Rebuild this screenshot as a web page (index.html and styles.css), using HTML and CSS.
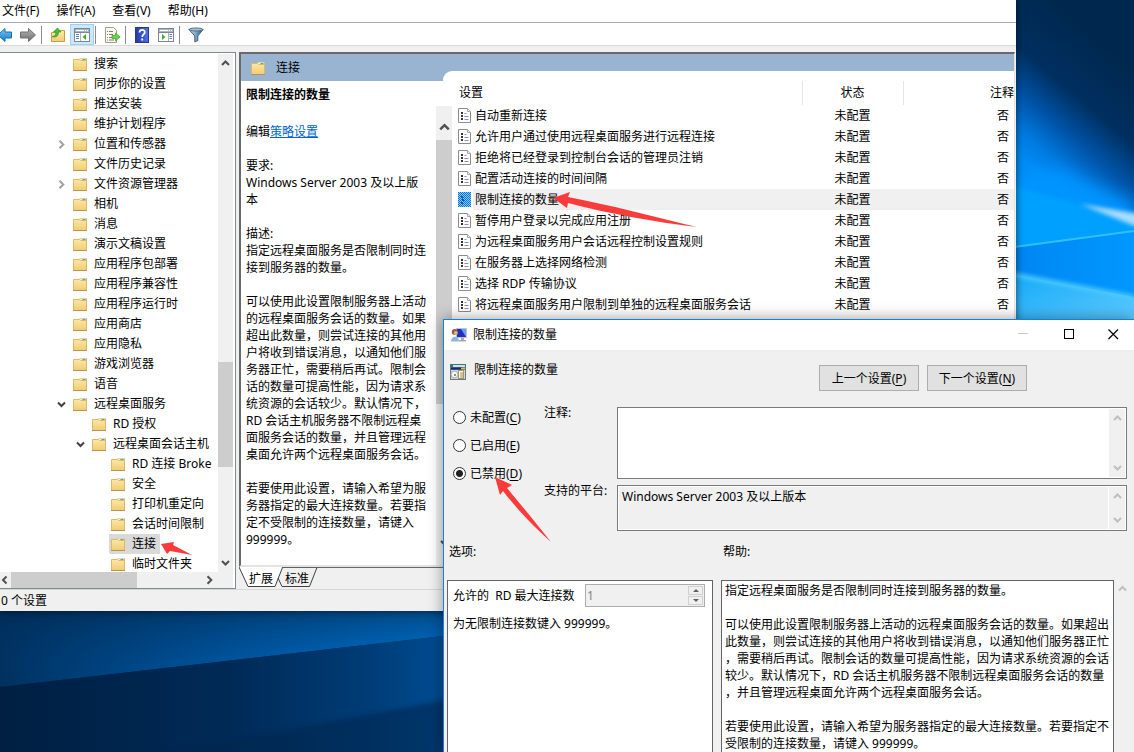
FILE: index.html
```html
<!DOCTYPE html>
<html lang="zh-CN">
<head>
<meta charset="utf-8">
<title>限制连接的数量</title>
<link rel="stylesheet" href="styles.css">
</head>
<body>
<svg class="defs" aria-hidden="true">
  <defs>
    <linearGradient id="gFolder" x1="0" y1="0" x2="0" y2="1"><stop offset="0" stop-color="#fdeaa8"/><stop offset="1" stop-color="#f0cc74"/></linearGradient>
    <linearGradient id="gBack" x1="0" y1="0" x2="0" y2="1"><stop offset="0" stop-color="#6cc8f8"/><stop offset="1" stop-color="#1c7cc8"/></linearGradient>
    <linearGradient id="gGrey" x1="0" y1="0" x2="0" y2="1"><stop offset="0" stop-color="#b4b4b4"/><stop offset="1" stop-color="#6e6e6e"/></linearGradient>
    <linearGradient id="gHelp" x1="0" y1="0" x2="1" y2="0"><stop offset="0" stop-color="#2838a0"/><stop offset="1" stop-color="#4c74e8"/></linearGradient>
    <linearGradient id="gFunnel" x1="0" y1="0" x2="1" y2="0"><stop offset="0" stop-color="#d6e6f0"/><stop offset=".5" stop-color="#7aa6c4"/><stop offset="1" stop-color="#34566e"/></linearGradient>
    <pattern id="pDither" width="2" height="2" patternUnits="userSpaceOnUse"><rect width="2" height="2" fill="#8cc4f0"/><rect width="1" height="1" fill="#0078d7"/><rect x="1" y="1" width="1" height="1" fill="#0078d7"/></pattern>
    <symbol id="folder" viewBox="0 0 14 14"><path d="M.5 2.500H6L7.500 1.500H13.500V13.500H.5Z" fill="url(#gFolder)" stroke="#dcb868"/><path d="M7.500 1.500H13V3.500H7.500Z" fill="#fbf0c8"/><path d="M7.500 3.500H13" stroke="#dcb868"/><path d="M9.500 2.500H12.500" stroke="#4a9ce0"/><path d="M0 13.500H14" stroke="#b89450"/></symbol>
    <symbol id="up" viewBox="0 0 9 9"><path d="M1 6.500 4.500 3 8 6.500" fill="none" stroke="currentColor" stroke-width="2"/></symbol>
    <symbol id="down" viewBox="0 0 9 9"><path d="M1 2.500 4.500 6 8 2.500" fill="none" stroke="currentColor" stroke-width="2"/></symbol>
    <symbol id="right" viewBox="0 0 9 9"><path d="M2.500 .8 6.300 4.500 2.500 8.200" fill="none" stroke="currentColor" stroke-width="2"/></symbol>
    <symbol id="left" viewBox="0 0 9 9"><path d="M6.500 1 3 4.500 6.500 8" fill="none" stroke="currentColor" stroke-width="2"/></symbol>
    <symbol id="doc" viewBox="0 0 13 15"><path d="M.5.5H9.500L12.500 3.500V14.500H.5Z" fill="#fff" stroke="#8c8c8c"/><path d="M9.500.5V3.500H12.500" fill="#eee" stroke="#a8a8a8"/><path d="M3 4H5V6H3ZM3 7H5V9H3ZM3 10H5V12H3Z" fill="#333"/><path d="M6.500 5.500H8.500M6.500 8.500H10.500M6.500 11.500H10.500" stroke="#8c8cb4"/></symbol>
    <symbol id="docsel" viewBox="0 0 13 15"><rect width="13" height="15" fill="url(#pDither)"/><path d="M3 4H5V6H3ZM4 7H6V9H4ZM3 10H5V12H3Z" fill="#0a5ca8"/></symbol>
    <symbol id="console" viewBox="0 0 16 14"><rect x=".5" y=".5" width="15" height="13" fill="#fff" stroke="#7d8794"/><rect x="1" y="1" width="14" height="3" fill="#a9b6c4"/><path d="M2 2.500H10M11 2.500H12M13 2.500H14" stroke="#fff"/><path d="M1 4.500H15" stroke="#7d8794"/><path d="M6.500 5V13" stroke="#aab4c0"/><path d="M2 6.500H5M2 8.500H5M2 10.500H5" stroke="#5c84c0"/><path d="M12 6V12L8.500 9Z" fill="#3cae2c"/></symbol>
    <symbol id="console2" viewBox="0 0 16 14"><rect x=".5" y=".5" width="15" height="13" fill="#fff" stroke="#7d8794"/><rect x="1" y="1" width="14" height="3" fill="#a9b6c4"/><path d="M2 2.500H10M11 2.500H12M13 2.500H14" stroke="#fff"/><path d="M1 4.500H15" stroke="#7d8794"/><path d="M10.500 5V13" stroke="#aab4c0"/><path d="M11.500 6.500H14M11.500 8.500H14M11.500 10.500H14" stroke="#5c84c0"/><path d="M4 6V12L7.500 9Z" fill="#3cae2c"/></symbol>
  </defs>
</svg>

<svg class="wallpaper" viewBox="0 0 1134 752" preserveAspectRatio="none" aria-hidden="true">
  <defs>
    <linearGradient id="wTop" gradientUnits="userSpaceOnUse" x1="1120" y1="60" x2="1030" y2="166"><stop offset="0" stop-color="#00284f"/><stop offset=".4" stop-color="#002f60"/><stop offset=".65" stop-color="#0054a8"/><stop offset=".85" stop-color="#007ae0"/><stop offset="1" stop-color="#008cf5"/></linearGradient>
    <linearGradient id="wMid" x1="0" y1="0" x2="1" y2="0"><stop offset="0" stop-color="#0084f0"/><stop offset="1" stop-color="#0098ff"/></linearGradient>
    <linearGradient id="wLow" x1="0" y1="0" x2="1" y2="1"><stop offset="0" stop-color="#10a8f8"/><stop offset="1" stop-color="#62ccff"/></linearGradient>
    <linearGradient id="wWedge" x1="0" y1="0" x2="1" y2="0"><stop offset="0" stop-color="#00305e"/><stop offset=".5" stop-color="#005aa8"/><stop offset="1" stop-color="#0084ec"/></linearGradient>
    <linearGradient id="wShade" x1="0" y1="0" x2="0" y2="1"><stop offset="0" stop-color="#00284e" stop-opacity=".7"/><stop offset="1" stop-color="#00407c" stop-opacity="0"/></linearGradient>
    <linearGradient id="wFloor" x1="0" y1="0" x2="1" y2="0"><stop offset="0" stop-color="#001f42"/><stop offset=".5" stop-color="#002a56"/><stop offset=".8" stop-color="#003c76"/><stop offset="1" stop-color="#005098"/></linearGradient>
    <filter id="soft"><feGaussianBlur stdDeviation="2"/></filter>
    <filter id="glow" x="-50%" y="-50%" width="200%" height="200%"><feGaussianBlur stdDeviation="8"/></filter>
  </defs>
  <rect width="1134" height="752" fill="#00264c"/>
  <rect x="1000" width="134" height="330" fill="url(#wTop)"/>
  <path d="M1000 175 1060 170 1134 205V232L1000 250Z" fill="#0094ff" filter="url(#glow)"/>
  <path d="M1000 182 1134 220V234L1000 252Z" fill="#00a0ff" filter="url(#soft)"/>
  <path d="M1080 204 1140 214V228Z" fill="#a8dcff" filter="url(#soft)"/>
  <path d="M1000 249 1134 231V330H1000Z" fill="url(#wMid)"/>
  <path d="M1000 249 1134 231" stroke="#30c0ff" stroke-width="2"/>
  <path d="M1000 272 1134 297V330H1000Z" fill="url(#wLow)"/>
  <path d="M1000 272 1134 297" stroke="#50ccff" stroke-width="4" filter="url(#soft)"/>
  <path d="M0 600H460V634L0 687Z" fill="url(#wWedge)"/>
  <path d="M0 600H460V634L0 687Z" fill="url(#wShade)"/>
  <path d="M0 687 460 634V752H0Z" fill="url(#wFloor)"/>
  <path d="M120 762 460 697V762Z" fill="#00264e" opacity=".55" filter="url(#soft)"/>
</svg>

<main class="window main-window">
  <nav class="menubar">
    <button>文件(F)</button><button>操作(A)</button><button>查看(V)</button><button>帮助(H)</button>
  </nav>
  <div class="toolbar">
    <button class="back" aria-label="后退"><svg width="14" height="16" viewBox="2 0 14 16"><path d="M0 8 7 1.500V5H13.500V11H7V14.500Z" fill="url(#gBack)" stroke="#1c6cb0"/></svg></button>
    <button aria-label="前进"><svg width="16" height="16"><path d="M15.500 8 8.500 1.500V5H.5V11H8.500V14.500Z" fill="url(#gGrey)" stroke="#707070"/></svg></button>
    <span class="sep"></span>
    <button aria-label="上移"><svg width="16" height="16"><path d="M1.500 5.500H8L9.500 3.500H14.500V14.500H1.500Z" fill="url(#gFolder)" stroke="#c8a04c"/><path d="M2 9.500C5 9.500 6 8 6 5H3.500L7.500 1 11 5H8.500C8.500 9 6 11 2 9.500Z" fill="#48c030" stroke="#2c9420" stroke-width=".7"/></svg></button>
    <button class="pressed" aria-label="显示控制台树"><svg width="16" height="14"><use href="#console"/></svg></button>
    <span class="sep"></span>
    <button aria-label="导出列表"><svg width="16" height="16"><path d="M1.500.5H9.500L12.500 3.500V15.500H1.500Z" fill="#fdfaee" stroke="#a49c88"/><path d="M3 4.500H4M5 4.500H9M3 7.500H4M5 7.500H9M3 10.500H4M5 10.500H8M3 13H4M5 13H10" stroke="#7c7c7c"/><path d="M8 8.500H11.500V6L16 10 11.500 14V11.500H8Z" fill="#64d44c" stroke="#38a028" stroke-width=".7"/></svg></button>
    <span class="sep"></span>
    <button aria-label="帮助"><svg width="14" height="16"><rect x=".5" y=".5" width="13" height="15" fill="url(#gHelp)" stroke="#283890"/><path d="M4.500 5.500C4.500 2 9.800 2 9.800 5.200 9.800 7.500 7.200 7.300 7.200 10M7.200 11.500V13.500" fill="none" stroke="#fff" stroke-width="1.800"/></svg></button>
    <button aria-label="显示操作窗格"><svg width="16" height="14"><use href="#console2"/></svg></button>
    <span class="sep"></span>
    <button aria-label="筛选器"><svg width="16" height="16"><path d="M1 2.500H15L9.800 9V13.500L6.800 15V9Z" fill="url(#gFunnel)" stroke="#406078"/><ellipse cx="8" cy="2.500" rx="7" ry="1.500" fill="#a8c4d8" stroke="#4c6c84"/></svg></button>
  </div>

  <div class="workspace">
    <section class="tree-pane">
      <div class="tree-body">
        <ul class="tree">
          <li><svg class="exp"></svg><span class="node"><svg class="fold"><use href="#folder"/></svg>搜索</span></li>
          <li><svg class="exp"></svg><span class="node"><svg class="fold"><use href="#folder"/></svg>同步你的设置</span></li>
          <li><svg class="exp"></svg><span class="node"><svg class="fold"><use href="#folder"/></svg>推送安装</span></li>
          <li><svg class="exp"></svg><span class="node"><svg class="fold"><use href="#folder"/></svg>维护计划程序</span></li>
          <li><svg class="exp closed"><use href="#right"/></svg><span class="node"><svg class="fold"><use href="#folder"/></svg>位置和传感器</span></li>
          <li><svg class="exp"></svg><span class="node"><svg class="fold"><use href="#folder"/></svg>文件历史记录</span></li>
          <li><svg class="exp closed"><use href="#right"/></svg><span class="node"><svg class="fold"><use href="#folder"/></svg>文件资源管理器</span></li>
          <li><svg class="exp"></svg><span class="node"><svg class="fold"><use href="#folder"/></svg>相机</span></li>
          <li><svg class="exp"></svg><span class="node"><svg class="fold"><use href="#folder"/></svg>消息</span></li>
          <li><svg class="exp"></svg><span class="node"><svg class="fold"><use href="#folder"/></svg>演示文稿设置</span></li>
          <li><svg class="exp"></svg><span class="node"><svg class="fold"><use href="#folder"/></svg>应用程序包部署</span></li>
          <li><svg class="exp"></svg><span class="node"><svg class="fold"><use href="#folder"/></svg>应用程序兼容性</span></li>
          <li><svg class="exp"></svg><span class="node"><svg class="fold"><use href="#folder"/></svg>应用程序运行时</span></li>
          <li><svg class="exp"></svg><span class="node"><svg class="fold"><use href="#folder"/></svg>应用商店</span></li>
          <li><svg class="exp"></svg><span class="node"><svg class="fold"><use href="#folder"/></svg>应用隐私</span></li>
          <li><svg class="exp"></svg><span class="node"><svg class="fold"><use href="#folder"/></svg>游戏浏览器</span></li>
          <li><svg class="exp"></svg><span class="node"><svg class="fold"><use href="#folder"/></svg>语音</span></li>
          <li><svg class="exp"><use href="#down"/></svg><span class="node"><svg class="fold"><use href="#folder"/></svg>远程桌面服务</span></li>
          <li class="l2"><svg class="exp"></svg><span class="node"><svg class="fold"><use href="#folder"/></svg>RD 授权</span></li>
          <li class="l2"><svg class="exp"><use href="#down"/></svg><span class="node"><svg class="fold"><use href="#folder"/></svg>远程桌面会话主机</span></li>
          <li class="l3"><svg class="exp"></svg><span class="node"><svg class="fold"><use href="#folder"/></svg>RD 连接 Broke</span></li>
          <li class="l3"><svg class="exp"></svg><span class="node"><svg class="fold"><use href="#folder"/></svg>安全</span></li>
          <li class="l3"><svg class="exp"></svg><span class="node"><svg class="fold"><use href="#folder"/></svg>打印机重定向</span></li>
          <li class="l3"><svg class="exp"></svg><span class="node"><svg class="fold"><use href="#folder"/></svg>会话时间限制</span></li>
          <li class="l3"><svg class="exp"></svg><span class="node selected"><svg class="fold"><use href="#folder"/></svg>连接</span></li>
          <li class="l3"><svg class="exp"></svg><span class="node"><svg class="fold"><use href="#folder"/></svg>临时文件夹</span></li>
        </ul>
        <div class="vscroll tree-vscroll"><svg class="arrow"><use href="#up"/></svg><i class="gap-a"></i><i class="thumb"></i><i class="gap-b"></i><svg class="arrow"><use href="#down"/></svg></div>
      </div>
      <div class="hscroll"><svg class="arrow"><use href="#left"/></svg><i class="thumb"></i><i class="rest"></i><svg class="arrow"><use href="#right"/></svg></div>
    </section>

    <section class="result-pane">
      <div class="result-frame">
        <div class="extended">
          <header class="ext-head"><h1><svg class="fold"><use href="#folder"/></svg>连接</h1><span class="corner"></span></header>
          <h2>限制连接的数量</h2>
          <div class="ext-body">
            <div class="ext-text">
              <p>编辑<a href="#">策略设置</a></p>
              <p>要求:<br>Windows Server 2003 及以上版本</p>
              <p>描述:<br>指定远程桌面服务是否限制同时连接到服务器的数量。</p>
              <p>可以使用此设置限制服务器上活动的远程桌面服务会话的数量。如果超出此数量，则尝试连接的其他用户将收到错误消息，以通知他们服务器正忙，需要稍后再试。限制会话的数量可提高性能，因为请求系统资源的会话较少。默认情况下，RD 会话主机服务器不限制远程桌面服务会话的数量，并且管理远程桌面允许两个远程桌面服务会话。</p>
              <p>若要使用此设置，请输入希望为服务器指定的最大连接数量。若要指定不受限制的连接数量，请键入 999999。</p>
            </div>
            <div class="vscroll ext-scroll"><svg class="arrow big"><use href="#up"/></svg><i class="thumb"></i><i class="rest"></i><svg class="arrow"><use href="#down"/></svg></div>
          </div>
        </div>
        <div class="list">
          <table>
            <colgroup><col class="c-icon"><col><col class="c-state"><col class="c-note"></colgroup>
            <thead><tr><th colspan="2">设置</th><th class="state">状态</th><th class="note">注释</th></tr></thead>
            <tbody>
              <tr><td><svg class="doc"><use href="#doc"/></svg></td><td>自动重新连接</td><td class="state">未配置</td><td class="note">否</td></tr>
              <tr><td><svg class="doc"><use href="#doc"/></svg></td><td>允许用户通过使用远程桌面服务进行远程连接</td><td class="state">未配置</td><td class="note">否</td></tr>
              <tr><td><svg class="doc"><use href="#doc"/></svg></td><td>拒绝将已经登录到控制台会话的管理员注销</td><td class="state">未配置</td><td class="note">否</td></tr>
              <tr><td><svg class="doc"><use href="#doc"/></svg></td><td>配置活动连接的时间间隔</td><td class="state">未配置</td><td class="note">否</td></tr>
              <tr class="current"><td><svg class="doc"><use href="#docsel"/></svg></td><td>限制连接的数量</td><td class="state">未配置</td><td class="note">否</td></tr>
              <tr><td><svg class="doc"><use href="#doc"/></svg></td><td>暂停用户登录以完成应用注册</td><td class="state">未配置</td><td class="note">否</td></tr>
              <tr><td><svg class="doc"><use href="#doc"/></svg></td><td>为远程桌面服务用户会话远程控制设置规则</td><td class="state">未配置</td><td class="note">否</td></tr>
              <tr><td><svg class="doc"><use href="#doc"/></svg></td><td>在服务器上选择网络检测</td><td class="state">未配置</td><td class="note">否</td></tr>
              <tr><td><svg class="doc"><use href="#doc"/></svg></td><td>选择 RDP 传输协议</td><td class="state">未配置</td><td class="note">否</td></tr>
              <tr><td><svg class="doc"><use href="#doc"/></svg></td><td>将远程桌面服务用户限制到单独的远程桌面服务会话</td><td class="state">未配置</td><td class="note">否</td></tr>
            </tbody>
          </table>
        </div>
      </div>
      <div class="tabs">
        <svg class="tab-shape" width="80" height="21" aria-hidden="true"><path d="M0 0 9 19.500H36L43 0Z" fill="#fff"/><path d="M0 0 9 19.500H36L43.500.5H78L70.500 19.500H43L39 11" fill="none" stroke="#404040"/><path d="M43.500.5H80" stroke="#606060"/></svg>
        <button>扩展</button><button>标准</button>
      </div>
    </section>
  </div>
  <footer class="status">0 个设置</footer>
</main>

<section class="window dialog" role="dialog" aria-labelledby="dlg-title">
  <header class="titlebar">
    <svg width="17" height="16" aria-hidden="true"><path d="M5.500 1.500H15.500V10.500H5.500Z" fill="#1c30c4" stroke="#c0c4cc"/><path d="M10 2H15V10Z" fill="#6c9cf0"/><path d="M10 11H13V13H15V14.500H8V13H10Z" fill="#a4a8b0"/><circle cx="3.800" cy="5" r="3" fill="#8c6038"/><circle cx="4.800" cy="6" r="2" fill="#e0b088"/><path d="M0 14.500C0 8 8 8 8 14.500Z" fill="#88b8e0"/></svg>
    <h1 id="dlg-title">限制连接的数量</h1>
    <button class="min" aria-label="最小化"><svg width="11" height="11"><path d="M0 4.500H10" stroke="#ccc"/></svg></button>
    <button aria-label="最大化"><svg width="11" height="11"><rect x=".5" y=".5" width="9" height="9" fill="none" stroke="#000"/></svg></button>
    <button aria-label="关闭"><svg width="11" height="11"><path d="M.5.5 10 10M10 .5.5 10" stroke="#000" stroke-width="1.200"/></svg></button>
  </header>
  <div class="policy">
    <svg width="16" height="16" aria-hidden="true"><rect width="16" height="16" fill="#68787c"/><rect width="16" height="3" fill="#2c7c80"/><rect x="3" y="1" width="12" height="2" fill="#dcdce4"/><path d="M1 4.500H12" stroke="#0c2c84" stroke-width="2"/><path d="M11 4.500H15" stroke="#e8c020" stroke-width="1.500"/><rect x="1" y="6" width="14" height="9" fill="#dcd8cc"/><circle cx="4.500" cy="10.500" r="3.500" fill="#f4f4f8" stroke="#a8a8b4"/><circle cx="5" cy="11" r="1" fill="#2c9440"/><rect x="8.500" y="6.500" width="5" height="8" fill="#fffbe4" stroke="#a09474"/><path d="M10 9H13M10 11H13M10 13H13" stroke="#a48848"/></svg>
    <span class="policy-name">限制连接的数量</span>
    <div class="policy-nav"><button>上一个设置(<u>P</u>)</button><button>下一个设置(<u>N</u>)</button></div>
  </div>
  <form class="settings">
    <div class="radios">
      <label><input type="radio" name="state"><span>未配置(<u>C</u>)</span></label>
      <label><input type="radio" name="state"><span>已启用(<u>E</u>)</span></label>
      <label><input type="radio" name="state" checked><span>已禁用(<u>D</u>)</span></label>
    </div>
    <label class="field-label" for="note">注释:</label>
    <div class="field field-note"><textarea id="note"></textarea><div class="vscroll muted"><svg class="arrow"><use href="#up"/></svg><i class="rest"></i><svg class="arrow"><use href="#down"/></svg></div></div>
    <label class="field-label" for="platform">支持的平台:</label>
    <div class="field field-platform"><textarea id="platform" readonly>Windows Server 2003 及以上版本</textarea><div class="vscroll muted"><svg class="arrow"><use href="#up"/></svg><i class="rest"></i><svg class="arrow"><use href="#down"/></svg></div></div>
  </form>
  <div class="details">
    <section class="options">
      <h2>选项:</h2>
      <div class="box">
        <div class="opt-row"><label for="max">允许的&nbsp; RD 最大连接数</label>
          <span class="spin"><input id="max" type="text" value="1" disabled><span class="spin-btns"><button disabled aria-label="增加"><svg width="6" height="3"><path d="M0 3 3 0 6 3Z"/></svg></button><button disabled aria-label="减少"><svg width="6" height="3"><path d="M0 0 3 3 6 0Z"/></svg></button></span></span></div>
        <p>为无限制连接数键入 999999。</p>
      </div>
    </section>
    <section class="help">
      <h2>帮助:</h2>
      <div class="box">
        <p>指定远程桌面服务是否限制同时连接到服务器的数量。</p>
        <p>可以使用此设置限制服务器上活动的远程桌面服务会话的数量。如果超出此数量，则尝试连接的其他用户将收到错误消息，以通知他们服务器正忙，需要稍后再试。限制会话的数量可提高性能，因为请求系统资源的会话较少。默认情况下，RD 会话主机服务器不限制远程桌面服务会话的数量，并且管理远程桌面允许两个远程桌面服务会话。</p>
        <p>若要使用此设置，请输入希望为服务器指定的最大连接数量。若要指定不受限制的连接数量，请键入 999999。</p>
      </div>
    </section>
    <div class="vscroll muted help-scroll"><svg class="arrow"><use href="#up"/></svg></div>
  </div>
</section>

<svg class="marks" aria-hidden="true">
  <path d="M553 198 570 192 568 197 C610 205 655 217 697 227 C655 222 610 214 568 203L567 208Z"/>
  <path d="M161 544 174 542 173 545 192 555 170 551 167 554Z"/>
  <path d="M495 477 512 485 507 488 C522 506 536 523 551 542 C532 525 516 508 503 491L500 495Z"/>
</svg>
</body>
</html>
```
FILE: styles.css
```css
* { box-sizing: border-box; }

html, body { height: 100%; }

body {
  margin: 0;
  position: relative;
  overflow: hidden;
  background: #00264c;
  color: #000;
  font: 12px/17px "Noto Sans", "Noto Sans CJK SC", sans-serif;
  text-spacing-trim: space-all;
}

h1, h2, p, ul { margin: 0; padding: 0; font-size: 12px; font-weight: 400; }
ul { list-style: none; }
button, input, textarea { font: inherit; color: inherit; margin: 0; padding: 0; border: 0; background: none; }
u { text-underline-offset: 2px; }

.defs { position: absolute; width: 0; height: 0; }
.wallpaper { position: absolute; inset: 0; width: 100%; height: 100%; }
.marks { position: absolute; inset: 0; width: 100%; height: 100%; pointer-events: none; fill: #fb3b3a; }

/* Windows on the desktop */
.window { position: absolute; display: flex; flex-direction: column; }
.main-window { inset: 0 118px 141px 0; background: #f0f0f0; box-shadow: 0 0 8px rgba(0, 0, 0, .6); }
.dialog { inset: 319px 0 0 443px; background: #f0f0f0; border: solid #1a80d2; border-width: 1px 0 0 1px; box-shadow: 0 0 14px rgba(0, 0, 0, .4); }

.menubar { display: flex; gap: 17px; height: 23px; padding: 0 0 1px 2px; background: #fff; border-bottom: 1px solid #a8a8a8; }
.toolbar { display: flex; align-items: center; height: 23px; padding: 1px 0 0 1px; background: #fff; border-bottom: 1px solid #dadada; }
.toolbar button { display: flex; align-items: center; justify-content: center; width: 24px; height: 21px; }
.toolbar .back { width: 15px; justify-content: flex-start; margin-left: -1px; }
.toolbar .pressed { background: #cce8ff; border: 1px solid #99d1ff; }
.toolbar .sep { width: 1px; height: 18px; margin: 0 4px 0 1px; background: #8c8c8c; }
.toolbar .back + button { margin-left: 1px; }

.workspace { flex: 1; min-height: 0; display: flex; gap: 3px; padding-top: 6px; }

/* Scrollbars */
.vscroll { display: flex; flex-direction: column; align-items: center; width: 16px; background: #f0f0f0; color: #505050; }
.arrow { flex: none; width: 9px; height: 18px; }
.thumb { background: #cdcdcd; }
.vscroll .thumb { width: 100%; }
.vscroll .rest { flex: 1; }
.muted { color: #bfbfbf; }

/* Console tree */
.tree-pane { flex: none; width: 236px; display: flex; flex-direction: column; background: #fff; border: solid #828790; border-width: 1px 1px 1px 0; }
.tree-body { flex: 1; min-height: 0; display: flex; padding: 1px 2px 0 0; }
.tree { flex: 1; min-width: 0; overflow: hidden; }
.tree li { display: flex; align-items: center; height: 20px; padding-left: 57px; white-space: nowrap; }
.tree .l2 { padding-left: 76px; }
.tree .l3 { padding-left: 95px; }
.exp { flex: none; width: 9px; height: 9px; margin-right: 5px; color: #404040; }
.exp.closed { color: #a0a0a0; }
.fold { flex: none; width: 14px; height: 14px; }
.node { display: flex; align-items: center; gap: 7px; height: 20px; padding: 0 4px 1px 2px; }
.node.selected { background: #d9d9d9; }
.tree-vscroll { width: 15px; }
.tree-vscroll .gap-a { flex: 289; }
.tree-vscroll .thumb { flex: 105; }
.tree-vscroll .gap-b { flex: 87; }
.hscroll { display: flex; align-items: center; height: 16px; margin-right: 2px; padding-right: 19px; background: #f0f0f0; color: #505050; }
.hscroll .thumb { flex: 126; height: 16px; margin-left: 2px; }
.hscroll .rest { flex: 68; }

/* Result pane */
.result-pane { flex: 1; min-width: 0; display: flex; flex-direction: column; margin-right: 1px; }
.result-frame { flex: 1; min-height: 0; display: flex; background: #fff; border: 2px solid #696969; border-color: #696969 #e3e3e3 #e3e3e3 #696969; border-right-width: 1px; }
.extended { flex: none; width: 212px; display: flex; flex-direction: column; }
.ext-head { display: flex; align-items: flex-end; justify-content: space-between; height: 27px; background: #99b4d1; }
.ext-head h1 { display: flex; align-items: center; gap: 11px; height: 27px; padding-left: 10px; }
.corner { width: 10px; height: 10px; background: #fff; border-radius: 9px 0 0 0; }
.extended h2 { height: 25px; padding: 5px 5px 0; font-weight: 700; }
.ext-body { flex: 1; min-height: 0; display: flex; justify-content: space-between; padding-right: 1px; overflow: hidden; }
.ext-text { width: 190px; padding: 17px 4px 0 5px; }
.ext-text p { margin-bottom: 17px; }
.ext-text a { color: #0066cc; }
.ext-scroll { padding-bottom: 13px; }
.ext-scroll .big { width: 11px; height: 34px; padding-top: 8px; }
.ext-scroll .thumb { flex: 265; }
.ext-scroll .rest { flex: 130; }

.list { flex: 1; min-width: 0; padding-top: 17px; overflow: hidden; background: linear-gradient(#99b4d1 17px, #fff 17px); }
table { width: 100%; table-layout: fixed; border-collapse: collapse; margin-top: 10px; }
.c-icon { width: 20px; }
.c-state { width: 101px; }
.c-note { width: 111px; }
th, td { height: 21px; padding: 0 2px; font-weight: 400; text-align: left; white-space: nowrap; }
th { height: 24px; padding: 0 0 1px 6px; }
th.state { border: solid #e5e5e5; border-width: 0 1px; }
th.state, td.state { padding-left: 0; padding-right: 0; text-align: center; }
th.note { padding-left: 0; text-align: right; }
td.note { padding: 0 5px 0 0; text-align: right; }
td:first-child { padding-left: 5px; }
.doc { display: block; width: 13px; height: 15px; }
.current td:not(:first-child) { background: #f0f0f0; }

.tabs { position: relative; display: flex; gap: 12px; height: 22px; padding: 1px 0 0 10px; background: #f0f0f0; border-top: 1px solid #696969; }
.tabs button { position: relative; height: 18px; }
.tab-shape { position: absolute; left: 0; top: -1px; }
.status { height: 22px; padding: 2px 1px; border-top: 1px solid #d7d7d7; }

/* Policy dialog */
.titlebar { flex: none; display: flex; align-items: center; height: 30px; padding: 0 0 1px 7px; background: #fff; }
.titlebar h1 { flex: 1; padding-left: 5px; }
.titlebar button { display: flex; align-items: center; justify-content: center; width: 46px; height: 29px; }
.titlebar button:last-child { width: 42px; }

.policy { display: flex; align-items: flex-start; gap: 8px; padding: 14px 107px 16px 6px; }
.policy-name { flex: 1; margin-top: -3px; }
.policy-nav { display: flex; gap: 8px; padding-top: 1px; }
.policy-nav button { width: 100px; height: 26px; background: #e1e1e1; border: 1px solid #adadad; }

.settings { display: grid; grid-template-columns: 90px 65px 1fr; grid-template-rows: 72px 46px; gap: 6px 8px; padding: 0 7px 0 2px; }
.radios { grid-row: 1 / 3; display: flex; flex-direction: column; gap: 8px; padding-left: 7px; }
.radios label { display: flex; align-items: center; gap: 4px; height: 20px; white-space: nowrap; }
.radios input { appearance: none; flex: none; width: 13px; height: 13px; border: 1px solid #333; border-radius: 50%; background: #fff; }
.radios input:checked { background: radial-gradient(circle, #222 3px, #fff 4px); }
.field-label { margin-top: -3px; white-space: nowrap; }
.field { display: flex; padding: 1px; border: 1px solid #7a7a7a; background: #fff; }
.field textarea { flex: 1; min-width: 0; padding: 1px 3px; resize: none; outline: none; overflow: hidden; }
.field-platform textarea { background: #f0f0f0; margin-right: 1px; }

.details { flex: 1; min-height: 0; display: flex; gap: 8px; padding: 12px 3px 0 3px; }
.details h2 { height: 37px; padding-left: 2px; }
.details section { display: flex; flex-direction: column; }
.box { flex: 1; min-height: 0; padding: 0 5px; background: #fff; border: 1px solid #646464; border-bottom: 0; overflow: hidden; }
.options { width: 266px; }
.options .box { padding-right: 7px; }
.opt-row { display: flex; justify-content: space-between; align-items: center; height: 24px; margin: 2px 0 8px; }
.spin { display: flex; width: 120px; height: 23px; padding: 1px; border: 1px solid #adadad; background: #f0f0f0; }
.spin input { flex: 1; min-width: 0; color: #838383; }
.spin-btns { display: flex; flex-direction: column; gap: 1px; width: 15px; }
.spin-btns button { flex: 1; display: flex; align-items: center; justify-content: center; border: 1px solid #d0d0d0; fill: #606060; }
.help { flex: 1; min-width: 0; }
.help .box { padding: 1px 3px; line-break: anywhere; }
.help p { margin-bottom: 17px; }
.help-scroll { margin: 37px 0 0 -8px; width: 17px; }
.help-scroll .arrow { height: 17px; }
```
